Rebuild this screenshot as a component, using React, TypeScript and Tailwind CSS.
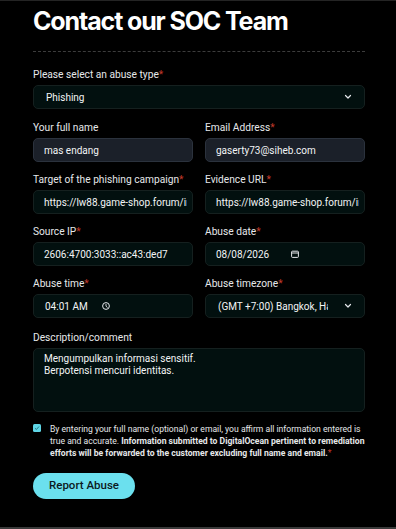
import React from "react";

const font = { fontFamily: "Roboto, 'Noto Sans', sans-serif" };

function Label({ text, required }: { text: string; required?: boolean }) {
  return (
    <label className="block text-[10.2px] leading-[13px] text-[#e6e8ea] mb-[4px]">
      {text}
      {required && <span className="text-[#c0392b]">*</span>}
    </label>
  );
}

function Chevron() {
  return (
    <svg width="8" height="6" viewBox="0 0 8 6" className="shrink-0">
      <path d="M1.5 1.5 L4 4 L6.5 1.5" fill="none" stroke="#e5e7eb" strokeWidth="1.2" strokeLinecap="round" strokeLinejoin="round" />
    </svg>
  );
}

function Box({
  children,
  filled,
  className = "",
}: {
  children: React.ReactNode;
  filled?: boolean;
  className?: string;
}) {
  const tone = filled
    ? "bg-[#1b2029] border-[#2b323d]"
    : "bg-[#02100f] border-[#15201f]";
  return (
    <div
      className={`h-[24px] rounded-[5px] border ${tone} flex items-center pl-[10px] pr-[5px] text-[10px] text-[#f2f4f5] ${className}`}
    >
      {children}
    </div>
  );
}

function Clip({ text }: { text: string }) {
  return <span className="overflow-hidden whitespace-nowrap block min-w-0 flex-1">{text}</span>;
}

export default function App() {
  return (
    <div className="h-[529px] bg-black border-t border-[#242424] border-b-2 border-b-[#3a3a3a] overflow-hidden" style={font}>
      <div className="w-[332px] ml-[33px]">
        <h1
          className="text-[25px] leading-[30px] font-bold text-white tracking-[-0.045em] mt-[5px]"
          style={{ fontFamily: "Inter, sans-serif" }}
        >
          Contact our SOC Team
        </h1>
        <div className="border-t border-dashed border-[#3c3c3c] mt-[15px] mb-[16px]" />

        <Label text="Please select an abuse type" required />
        <Box className="pl-[12px] pr-[12px] justify-between">
          <span>Phishing</span>
          <Chevron />
        </Box>

        <div className="grid grid-cols-2 gap-x-[12px] gap-y-[11px] mt-[12px]">
          <div>
            <Label text="Your full name" />
            <Box filled>
              <Clip text="mas endang" />
            </Box>
          </div>
          <div>
            <Label text="Email Address" required />
            <Box filled>
              <Clip text="gaserty73@siheb.com" />
            </Box>
          </div>
          <div>
            <Label text="Target of the phishing campaign" required />
            <Box>
              <Clip text="https://lw88.game-shop.forum/index" />
            </Box>
          </div>
          <div>
            <Label text="Evidence URL" required />
            <Box>
              <Clip text="https://lw88.game-shop.forum/index" />
            </Box>
          </div>
          <div>
            <Label text="Source IP" required />
            <Box>
              <Clip text="2606:4700:3033::ac43:ded7" />
            </Box>
          </div>
          <div>
            <Label text="Abuse date" required />
            <Box>
              <span className="w-[75px]">08/08/2026</span>
              <svg width="8" height="8" viewBox="0 0 8 8">
                <rect x="0.6" y="1.2" width="6.8" height="6.2" rx="0.8" fill="none" stroke="#e5e7eb" strokeWidth="1" />
                <line x1="0.6" y1="3" x2="7.4" y2="3" stroke="#e5e7eb" strokeWidth="1" />
              </svg>
            </Box>
          </div>
          <div>
            <Label text="Abuse time" required />
            <Box>
              <span className="w-[58px] pl-[1px]">04:01 AM</span>
              <svg width="8" height="8" viewBox="0 0 8 8">
                <circle cx="4" cy="4" r="3.4" fill="none" stroke="#e5e7eb" strokeWidth="1" />
                <path d="M4 2 V4.2 L5.5 5.5" fill="none" stroke="#e5e7eb" strokeWidth="0.9" />
              </svg>
            </Box>
          </div>
          <div>
            <Label text="Abuse timezone" required />
            <Box className="pl-[12px] pr-[12px] justify-between">
              <span className="overflow-hidden whitespace-nowrap block w-[110px]">(GMT +7:00) Bangkok, Hanoi, Jakarta</span>
              <Chevron />
            </Box>
          </div>
        </div>

        <div className="mt-[13px]">
          <Label text="Description/comment" />
          <div className="h-[64px] rounded-[5px] border border-[#15201f] bg-[#02100f] px-[10px] pt-[4px] text-[10px] leading-[12px] text-[#f2f4f5]">
            Mengumpulkan informasi sensitif.
            <br />
            Berpotensi mencuri identitas.
          </div>
        </div>

        <div className="flex gap-[9px] mt-[11px]">
          <div className="w-[8px] h-[8px] mt-[1px] rounded-[1.5px] bg-[#5fd6e6] flex items-center justify-center shrink-0">
            <svg width="6" height="6" viewBox="0 0 6 6">
              <path d="M1 3.2 L2.4 4.5 L5 1.5" fill="none" stroke="#1d6f7a" strokeWidth="0.9" />
            </svg>
          </div>
          <p className="text-[8.6px] leading-[12px] text-[#e6e8ea]">
            By entering your full name (optional) or email, you affirm all information entered is true and accurate.{" "}
            <span className="font-bold">
              Information submitted to DigitalOcean pertinent to remediation efforts will be forwarded to the customer excluding full name and email.
            </span>
            <span className="text-[#c0392b]">*</span>
          </p>
        </div>

        <button className="mt-[14px] h-[26px] w-[102px] rounded-full bg-[#6be0ee] text-[#0b1a22] text-[11.5px] font-medium">
          Report Abuse
        </button>
      </div>
    </div>
  );
}
